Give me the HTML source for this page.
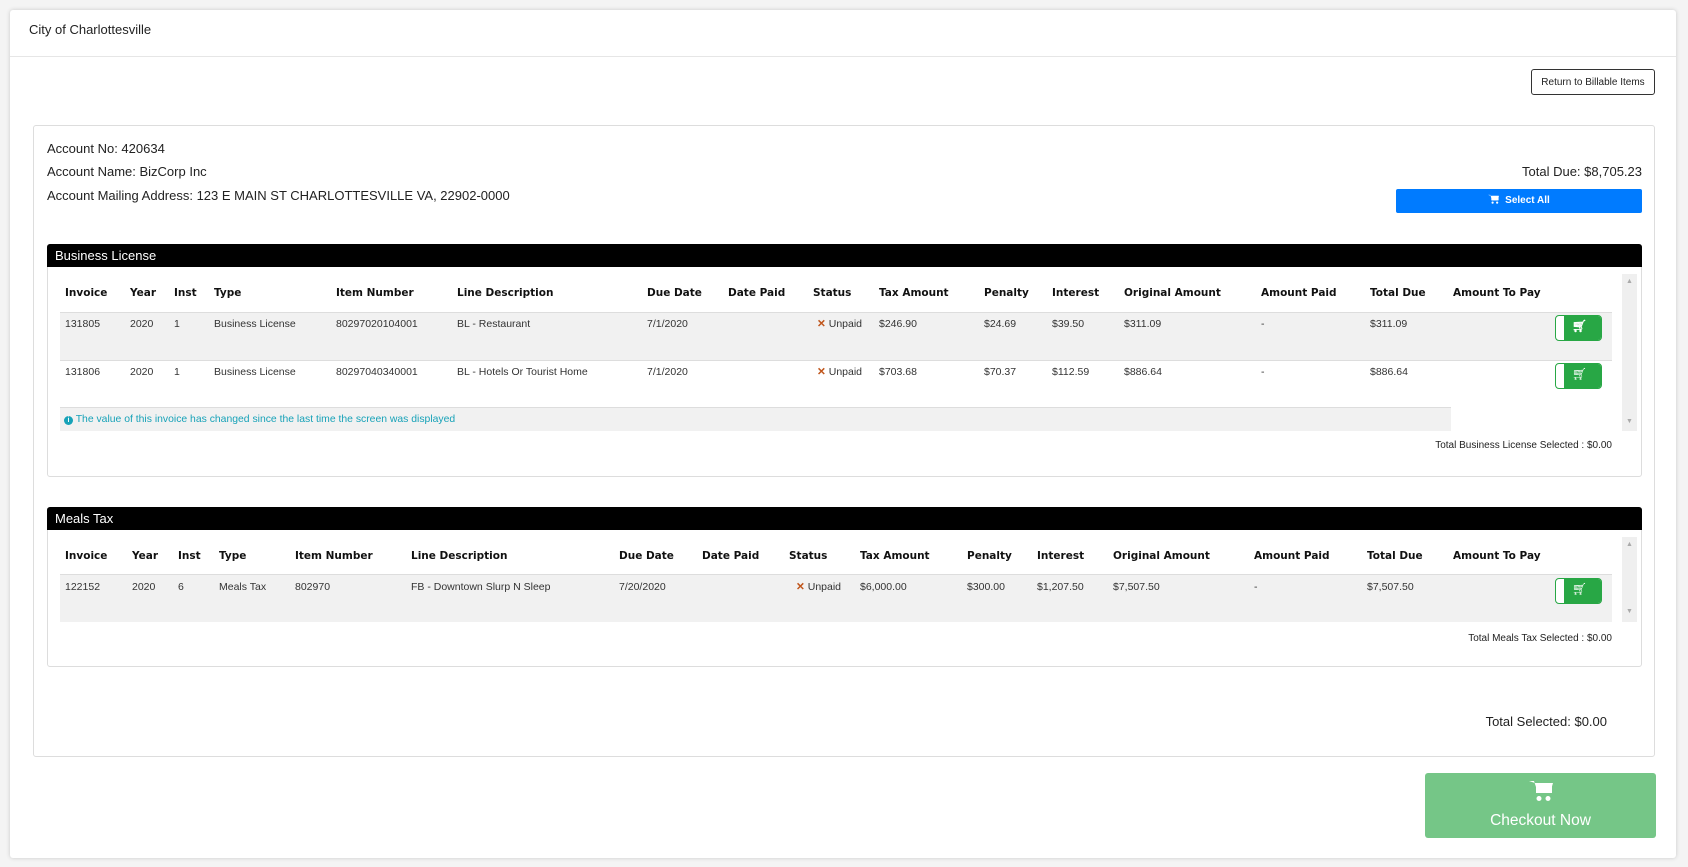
<!DOCTYPE html>
<html><head><meta charset="utf-8"><style>
*{box-sizing:border-box;margin:0;padding:0}
body{width:1688px;height:867px;background:#f4f4f4;font-family:"Liberation Sans",Arial,sans-serif;color:#222;position:relative;overflow:hidden}
.a{position:absolute;white-space:nowrap}
.card{position:absolute;left:10px;top:10px;width:1666px;height:848px;background:#fff;border-radius:3px;box-shadow:0 0 4px rgba(0,0,0,.18)}
.hdrline{position:absolute;left:10px;top:56px;width:1666px;height:1px;background:#e6e6e6}
.panel{position:absolute;border:1px solid #ddd;border-radius:3px;background:#fff}
.bar{position:absolute;background:#000;color:#fff;font-size:13px;padding:4px 0 0 8px;border-radius:3px 3px 0 0}
.th{font-weight:bold;color:#111;font-family:"DejaVu Sans","Liberation Sans",sans-serif;font-size:10.5px}
.td{font-size:10.5px;color:#333}
.row{position:absolute;background:#f1f1f1;border-top:1px solid #ddd}
.cart{position:absolute;width:45px;height:24px;background:#28a745;border-radius:3px;border-left:8px solid #fff;outline:1px solid #28a745}
.sb{position:absolute;background:#efefef}
.x{color:#c0561c;font-weight:bold}
</style></head><body>
<div class="card"></div>
<div class="a" style="left:29px;top:22px;font-size:13px">City of Charlottesville</div>
<div class="hdrline"></div>
<div class="a" style="left:1531px;top:69px;width:124px;height:26px;border:1px solid #333;border-radius:3px;font-size:10px;text-align:center;line-height:26px">Return to Billable Items</div>

<div class="panel" style="left:33px;top:125px;width:1622px;height:632px"></div>
<div class="a" style="left:47px;top:141px;font-size:13px">Account No: 420634</div>
<div class="a" style="left:47px;top:164px;font-size:13px">Account Name: BizCorp Inc</div>
<div class="a" style="left:47px;top:188px;font-size:13px">Account Mailing Address: 123 E MAIN ST CHARLOTTESVILLE VA, 22902-0000</div>
<div class="a" style="right:46px;top:164px;font-size:13px">Total Due: $8,705.23</div>
<div class="a" style="left:1396px;top:189px;width:246px;height:24px;background:#007bff;border-radius:2px;color:#fff;font-size:10px;font-weight:bold;text-align:center;line-height:24px"><svg width="11" height="10" viewBox="0 0 12 11" style="vertical-align:-1px;margin-right:6px"><path d="M0 1h2.5l2 6h6l1.5-5H3.5" fill="#fff"/><rect x="3.6" y="2" width="8" height="5" fill="#fff"/><circle cx="5" cy="9.5" r="1.2" fill="#fff"/><circle cx="10" cy="9.5" r="1.2" fill="#fff"/></svg>Select All</div>

<!-- Business License -->
<div class="panel" style="left:47px;top:244px;width:1595px;height:233px"></div>
<div class="bar" style="left:47px;top:244px;width:1595px;height:23px">Business License</div>
<div class="sb" style="left:1622px;top:274px;width:15px;height:157px"></div>
<div class="a" style="left:1626px;top:278px;font-size:7px;color:#aaa">▲</div>
<div class="a" style="left:1626px;top:418px;font-size:7px;color:#aaa">▼</div>
<div class="row" style="left:60px;top:312px;width:1552px;height:48px"></div>
<div class="row" style="left:60px;top:360px;width:1552px;height:47px;background:#fff"></div>
<div class="row" style="left:60px;top:407px;width:1391px;height:24px"></div>
<div class="a th" style="left:65px;top:287px">Invoice</div><div class="a th" style="left:130px;top:287px">Year</div><div class="a th" style="left:174px;top:287px">Inst</div><div class="a th" style="left:214px;top:287px">Type</div><div class="a th" style="left:336px;top:287px">Item Number</div><div class="a th" style="left:457px;top:287px">Line Description</div><div class="a th" style="left:647px;top:287px">Due Date</div><div class="a th" style="left:728px;top:287px">Date Paid</div><div class="a th" style="left:813px;top:287px">Status</div><div class="a th" style="left:879px;top:287px">Tax Amount</div><div class="a th" style="left:984px;top:287px">Penalty</div><div class="a th" style="left:1052px;top:287px">Interest</div><div class="a th" style="left:1124px;top:287px">Original Amount</div><div class="a th" style="left:1261px;top:287px">Amount Paid</div><div class="a th" style="left:1370px;top:287px">Total Due</div><div class="a th" style="left:1453px;top:287px">Amount To Pay</div>
<div class="a td" style="left:65px;top:318px">131805</div><div class="a td" style="left:130px;top:318px">2020</div><div class="a td" style="left:174px;top:318px">1</div><div class="a td" style="left:214px;top:318px">Business License</div><div class="a td" style="left:336px;top:318px">80297020104001</div><div class="a td" style="left:457px;top:318px">BL - Restaurant</div><div class="a td" style="left:647px;top:318px">7/1/2020</div><div class="a td" style="left:817px;top:318px"><span class="x">✕</span> Unpaid</div><div class="a td" style="left:879px;top:318px">$246.90</div><div class="a td" style="left:984px;top:318px">$24.69</div><div class="a td" style="left:1052px;top:318px">$39.50</div><div class="a td" style="left:1124px;top:318px">$311.09</div><div class="a td" style="left:1261px;top:318px">-</div><div class="a td" style="left:1370px;top:318px">$311.09</div>
<div class="cart" style="left:1556px;top:316px"></div><div class="a" style="left:1572px;top:319px;color:#fff;font-size:12px;font-weight:bold">🛒︎</div>
<div class="a td" style="left:65px;top:366px">131806</div><div class="a td" style="left:130px;top:366px">2020</div><div class="a td" style="left:174px;top:366px">1</div><div class="a td" style="left:214px;top:366px">Business License</div><div class="a td" style="left:336px;top:366px">80297040340001</div><div class="a td" style="left:457px;top:366px">BL - Hotels Or Tourist Home</div><div class="a td" style="left:647px;top:366px">7/1/2020</div><div class="a td" style="left:817px;top:366px"><span class="x">✕</span> Unpaid</div><div class="a td" style="left:879px;top:366px">$703.68</div><div class="a td" style="left:984px;top:366px">$70.37</div><div class="a td" style="left:1052px;top:366px">$112.59</div><div class="a td" style="left:1124px;top:366px">$886.64</div><div class="a td" style="left:1261px;top:366px">-</div><div class="a td" style="left:1370px;top:366px">$886.64</div>
<div class="cart" style="left:1556px;top:364px"></div><div class="a" style="left:1572px;top:367px;color:#fff;font-size:12px">🛒︎</div>
<div class="a" style="left:64px;top:414px;font-size:10.4px;color:#17a2b8"><span style="display:inline-block;width:9px;height:9px;border-radius:50%;background:#17a2b8;color:#fff;font-size:7px;text-align:center;line-height:9px;font-weight:bold">i</span> The value of this invoice has changed since the last time the screen was displayed</div>
<div class="a" style="right:76px;top:440px;font-size:10px">Total Business License Selected : $0.00</div>

<!-- Meals Tax -->
<div class="panel" style="left:47px;top:507px;width:1595px;height:160px"></div>
<div class="bar" style="left:47px;top:507px;width:1595px;height:23px">Meals Tax</div>
<div class="sb" style="left:1622px;top:537px;width:15px;height:85px"></div>
<div class="a" style="left:1626px;top:541px;font-size:7px;color:#aaa">▲</div>
<div class="a" style="left:1626px;top:608px;font-size:7px;color:#aaa">▼</div>
<div class="row" style="left:60px;top:574px;width:1552px;height:48px"></div>
<div class="a th" style="left:65px;top:550px">Invoice</div><div class="a th" style="left:132px;top:550px">Year</div><div class="a th" style="left:178px;top:550px">Inst</div><div class="a th" style="left:219px;top:550px">Type</div><div class="a th" style="left:295px;top:550px">Item Number</div><div class="a th" style="left:411px;top:550px">Line Description</div><div class="a th" style="left:619px;top:550px">Due Date</div><div class="a th" style="left:702px;top:550px">Date Paid</div><div class="a th" style="left:789px;top:550px">Status</div><div class="a th" style="left:860px;top:550px">Tax Amount</div><div class="a th" style="left:967px;top:550px">Penalty</div><div class="a th" style="left:1037px;top:550px">Interest</div><div class="a th" style="left:1113px;top:550px">Original Amount</div><div class="a th" style="left:1254px;top:550px">Amount Paid</div><div class="a th" style="left:1367px;top:550px">Total Due</div><div class="a th" style="left:1453px;top:550px">Amount To Pay</div>
<div class="a td" style="left:65px;top:581px">122152</div><div class="a td" style="left:132px;top:581px">2020</div><div class="a td" style="left:178px;top:581px">6</div><div class="a td" style="left:219px;top:581px">Meals Tax</div><div class="a td" style="left:295px;top:581px">802970</div><div class="a td" style="left:411px;top:581px">FB - Downtown Slurp N Sleep</div><div class="a td" style="left:619px;top:581px">7/20/2020</div><div class="a td" style="left:796px;top:581px"><span class="x">✕</span> Unpaid</div><div class="a td" style="left:860px;top:581px">$6,000.00</div><div class="a td" style="left:967px;top:581px">$300.00</div><div class="a td" style="left:1037px;top:581px">$1,207.50</div><div class="a td" style="left:1113px;top:581px">$7,507.50</div><div class="a td" style="left:1254px;top:581px">-</div><div class="a td" style="left:1367px;top:581px">$7,507.50</div>
<div class="cart" style="left:1556px;top:579px"></div><div class="a" style="left:1572px;top:582px;color:#fff;font-size:12px">🛒︎</div>
<div class="a" style="right:76px;top:633px;font-size:10px">Total Meals Tax Selected : $0.00</div>

<div class="a" style="right:81px;top:714px;font-size:13px">Total Selected: $0.00</div>

<div class="a" style="left:1425px;top:773px;width:231px;height:65px;background:#75c687;border-radius:3px;color:#fff;text-align:center">
<svg width="24" height="22" viewBox="0 0 24 22" style="margin-top:7px"><path d="M0 1h5l4 12h12l3-10H6" fill="#fff"/><rect x="7" y="3" width="16" height="10" fill="#fff"/><circle cx="10" cy="18.5" r="2.5" fill="#fff"/><circle cx="19" cy="18.5" r="2.5" fill="#fff"/></svg>
<div style="font-size:15.5px;margin-top:5px">Checkout Now</div></div>
</body></html>
